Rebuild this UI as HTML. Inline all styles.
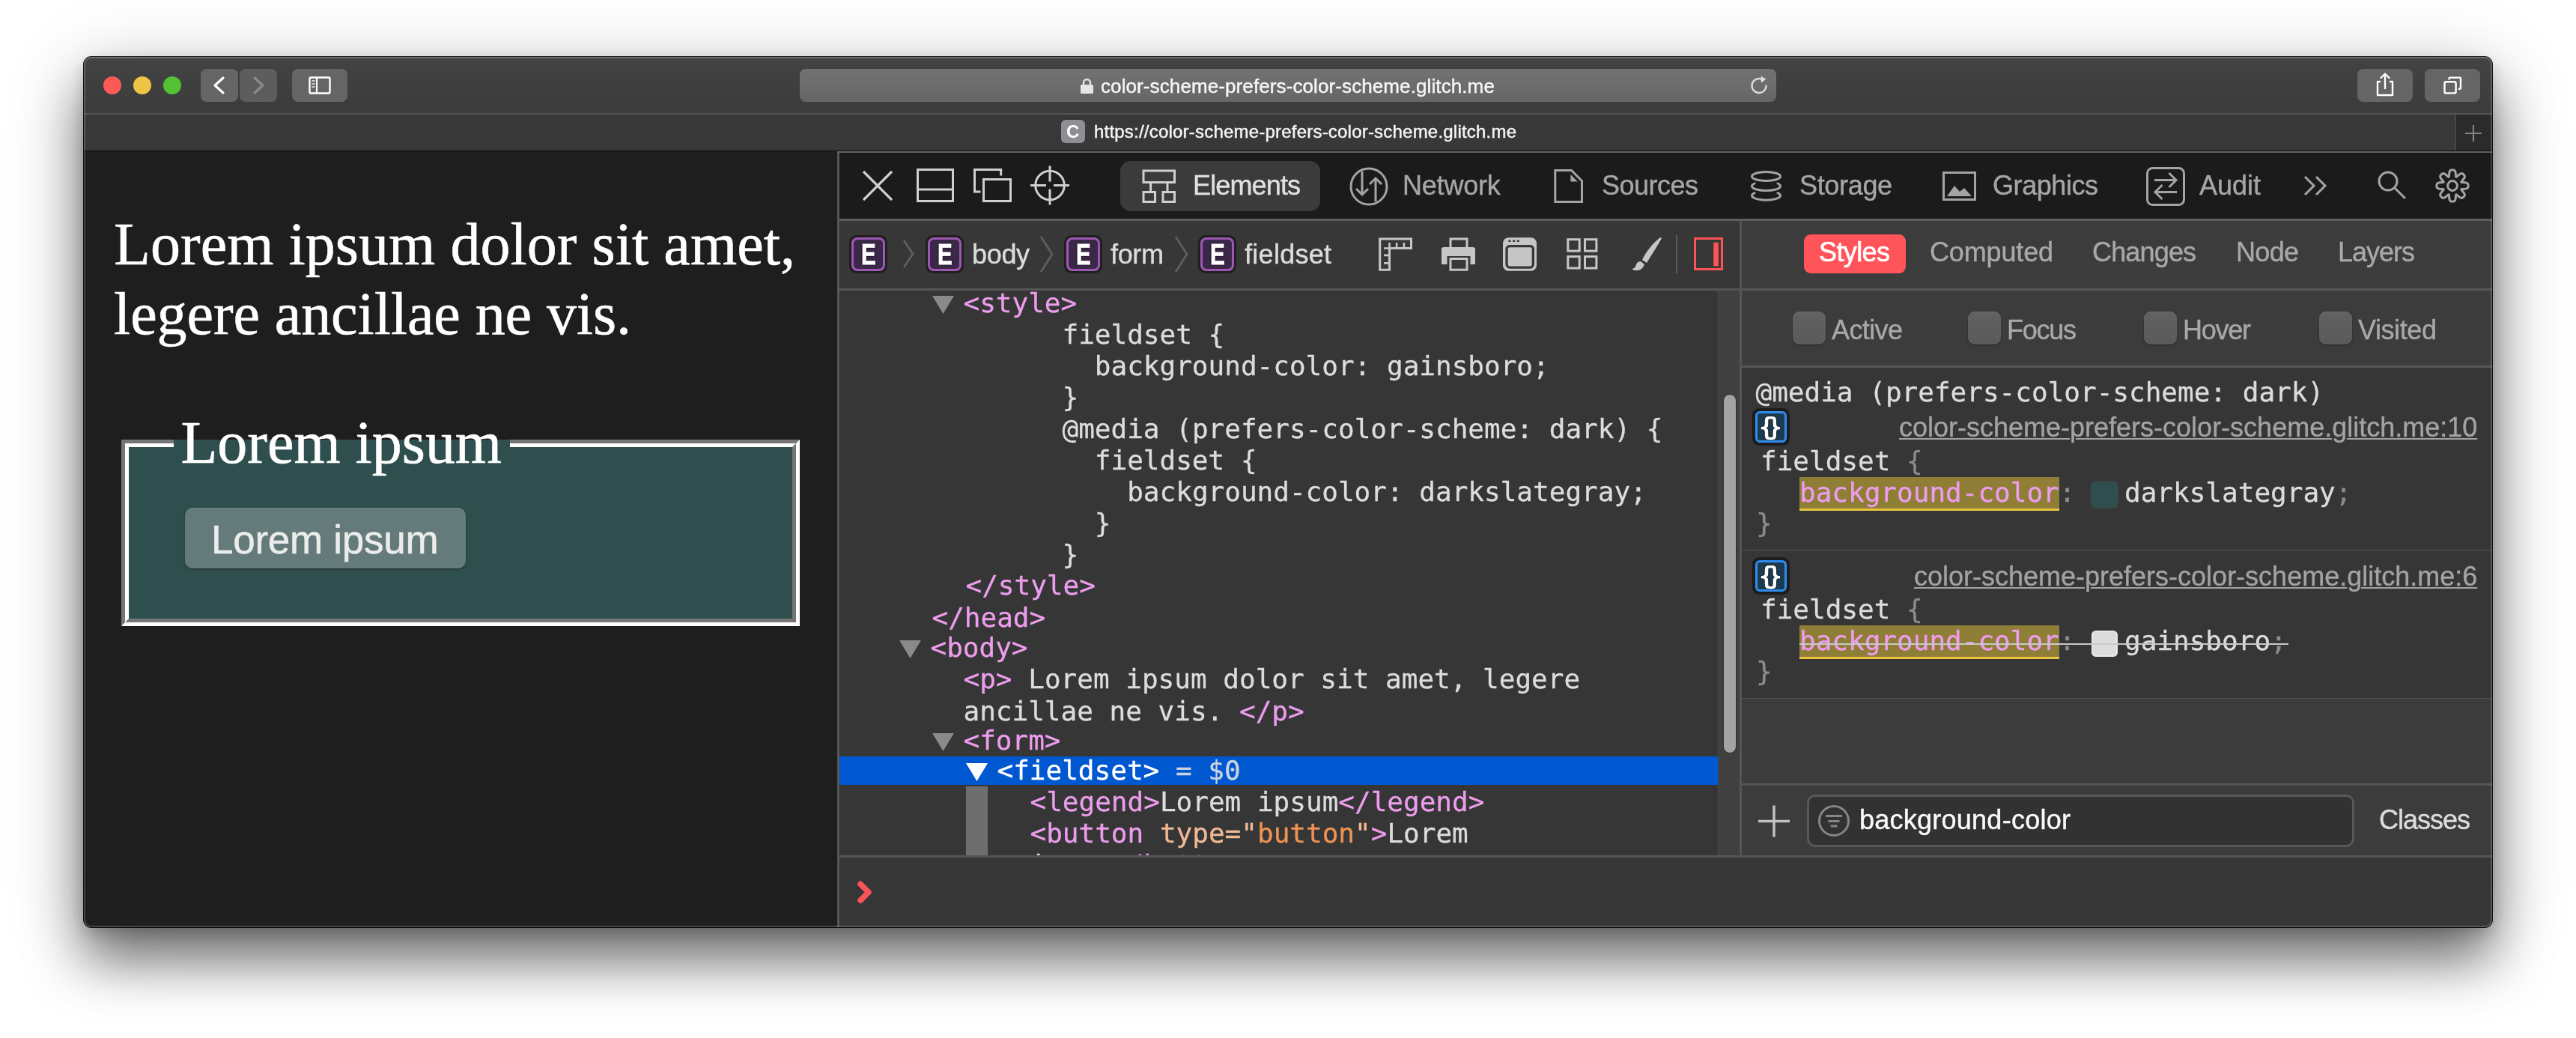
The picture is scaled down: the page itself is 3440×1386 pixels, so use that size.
<!DOCTYPE html>
<html lang="en"><head><meta charset="utf-8"><title>color-scheme-prefers-color-scheme.glitch.me</title><style>
html,body{margin:0;padding:0;background:#fff}
html{overflow:hidden}
body{width:3440px;height:1386px;position:relative;overflow:hidden}
#win{position:absolute;left:112px;top:76px;width:3216px;height:1162px;border-radius:10px;overflow:hidden;background:#1e1e1e}
#sh{position:absolute;left:112px;top:76px;width:3216px;height:1162px;border-radius:10px;box-shadow:0 0 0 1px rgba(0,0,0,.9),0 7px 18px rgba(0,0,0,.17),0 44px 70px rgba(0,0,0,.5),0 18px 110px rgba(0,0,0,.2)}
#in{will-change:transform;position:absolute;left:-112px;top:-76px;width:3440px;height:1386px}
#hl{position:absolute;left:0;top:0;right:0;bottom:0;border-radius:10px;box-shadow:inset 0 0 0 2px rgba(255,255,255,.17);pointer-events:none}
.t{position:absolute;white-space:pre;line-height:1}
.m{font:36px/1 "DejaVu Sans Mono","Liberation Mono",monospace;-webkit-text-stroke:.3px}
.r{position:absolute;display:block}
</style></head><body>
<div id="sh"></div>
<div id="win"><div id="in">
<div class="r" style="left:111px;top:75px;width:3218px;height:77px;background:linear-gradient(#434343,#3b3b3b);"></div>
<div class="r" style="left:111px;top:75px;width:3218px;height:2px;background:rgba(255,255,255,.12);"></div>
<div class="r" style="left:111px;top:151px;width:3218px;height:2px;background:#545454;"></div>
<div class="r" style="left:111px;top:153px;width:3218px;height:48px;background:#383838;"></div>
<div class="r" style="left:111px;top:201px;width:3218px;height:1px;background:#0a0a0a;"></div>
<div class="r" style="left:138px;top:102px;width:24px;height:24px;background:#fc5a56;border-radius:50%"></div>
<div class="r" style="left:178px;top:102px;width:24px;height:24px;background:#eec447;border-radius:50%"></div>
<div class="r" style="left:218px;top:102px;width:24px;height:24px;background:#52c233;border-radius:50%"></div>
<div class="r" style="left:268px;top:92px;width:50px;height:44px;background:#656565;border-radius:8px"></div>
<div class="r" style="left:320px;top:92px;width:50px;height:44px;background:#5d5d5d;border-radius:8px"></div>
<div class="r" style="left:390px;top:92px;width:74px;height:44px;background:#656565;border-radius:8px"></div>
<svg class="r" style="left:268px;top:92px;" width="50" height="44" viewBox="0 0 50 44" fill="none"><path d="M30 12 L19 22 L30 32" stroke="#fff" stroke-width="3.2" stroke-linecap="round" stroke-linejoin="round"/></svg>
<svg class="r" style="left:320px;top:92px;" width="50" height="44" viewBox="0 0 50 44" fill="none"><path d="M20 12 L31 22 L20 32" stroke="#8a8a8a" stroke-width="3.2" stroke-linecap="round" stroke-linejoin="round"/></svg>
<svg class="r" style="left:390px;top:92px;" width="74" height="44" viewBox="0 0 74 44" fill="none"><rect x="23.500" y="11.500" width="27" height="21" rx="1.500" stroke="#fff" stroke-width="2.400"/><path d="M33 11v22" stroke="#fff" stroke-width="2.200"/><path d="M26.5 16h4M26.5 20h4M26.5 24h4" stroke="#cfcfcf" stroke-width="2"/></svg>
<div class="r" style="left:1068px;top:92px;width:1304px;height:44px;background:linear-gradient(#727272,#666);border-radius:8px"></div>
<svg class="r" style="left:1442px;top:103px;" width="20" height="24" viewBox="0 0 20 24" fill="none"><rect x="1" y="10" width="17" height="12" rx="1.5" fill="#e6e6e6"/><path d="M5 11V7.5a4.5 4.5 0 0 1 9 0V11" stroke="#e6e6e6" stroke-width="2.4"/></svg>
<div class="t" style='left:1470.00px;top:102.49px;font:26px/1 "Liberation Sans",sans-serif;color:#f6f6f6;letter-spacing:0.101px;-webkit-text-stroke:.45px #f6f6f6;'>color-scheme-prefers-color-scheme.glitch.me</div>
<svg class="r" style="left:2334px;top:99px;" width="30" height="30" viewBox="0 0 30 30" fill="none"><path d="M24.5 15.5a9.5 9.5 0 1 1-4.2-7.9" stroke="#dcdcdc" stroke-width="2.4" stroke-linecap="round"/><path d="M17.5 2.5l7 4.3-6.6 4.7z" fill="#dcdcdc"/></svg>
<div class="r" style="left:3148px;top:92px;width:74px;height:44px;background:#656565;border-radius:8px"></div>
<div class="r" style="left:3238px;top:92px;width:74px;height:44px;background:#656565;border-radius:8px"></div>
<svg class="r" style="left:3148px;top:92px;" width="74" height="44" viewBox="0 0 74 44" fill="none"><path d="M31 17h-4v18h20V17h-4" stroke="#fff" stroke-width="2.4" stroke-linejoin="round"/><path d="M37 26V7M31.5 12l5.5-5.5 5.5 5.5" stroke="#fff" stroke-width="2.4" stroke-linecap="round" stroke-linejoin="round"/></svg>
<svg class="r" style="left:3238px;top:92px;" width="74" height="44" viewBox="0 0 74 44" fill="none"><rect x="26.500" y="17.200" width="15.100" height="15.200" rx="2" stroke="#fff" stroke-width="2.400"/><path d="M32.500 13.500V12.800Q32.500 11.600 33.700 11.600H46.800Q48 11.600 48 12.800V25.500Q48 26.700 46.800 26.700H45.800" stroke="#fff" stroke-width="2.400" stroke-linecap="round"/></svg>
<div class="r" style="left:1417px;top:160px;width:32px;height:31px;background:#8e8e93;border-radius:6px"></div>
<div class="t" style='left:1424.00px;top:163.68px;font:24px/1 "Liberation Sans",sans-serif;color:#fff;font-weight:700;'>C</div>
<div class="t" style='left:1461.00px;top:164.18px;font:24px/1 "Liberation Sans",sans-serif;color:#f4f4f4;letter-spacing:0.210px;-webkit-text-stroke:.45px #f4f4f4;'>https://color-scheme-prefers-color-scheme.glitch.me</div>
<div class="r" style="left:3279px;top:153px;width:50px;height:48px;background:#2b2b2b;"></div>
<div class="r" style="left:3278px;top:153px;width:2px;height:48px;background:#484848;"></div>
<svg class="r" style="left:3291px;top:166px;" width="24" height="24" viewBox="0 0 24 24" fill="none"><path d="M12 1v22M1 12h22" stroke="#808080" stroke-width="2.200"/></svg>
<div class="r" style="left:111px;top:202px;width:1007px;height:1036px;background:#1e1e1e;"></div>
<div class="t" style='left:152.00px;top:286.30px;font:80px/1 "Liberation Serif",serif;color:#fff;letter-spacing:0.048px;-webkit-text-stroke:.6px #fff;'>Lorem ipsum dolor sit amet,</div>
<div class="t" style='left:152.00px;top:379.20px;font:80px/1 "Liberation Serif",serif;color:#fff;letter-spacing:-0.091px;-webkit-text-stroke:.6px #fff;'>legere ancillae ne vis.</div>
<div class="r" style="left:162px;top:587px;width:906px;height:249px;background:#2f4f4f;box-sizing:border-box;border:10px groove #c0c0c0;border-color:#767676 #fff #fff #767676"></div>
<div class="r" style="left:162px;top:587px;width:906px;height:249px;box-sizing:border-box;border:5px solid;border-color:#767676 #fff #fff #767676"></div>
<div class="r" style="left:167px;top:592px;width:896px;height:239px;box-sizing:border-box;border:5px solid;border-color:#fff #767676 #767676 #fff"></div>
<div class="r" style="left:232px;top:587px;width:449px;height:13px;background:#2f4f4f;"></div>
<div class="t" style='left:241.50px;top:551.20px;font:80px/1 "Liberation Serif",serif;color:#fff;letter-spacing:-0.025px;-webkit-text-stroke:.6px #fff;'>Lorem ipsum</div>
<div class="r" style="left:247px;top:678px;width:375px;height:81px;background:#657b7b;border-radius:10px;box-shadow:0 1px 3px rgba(0,0,0,.45), inset 0 1px 0 rgba(255,255,255,.08)"></div>
<div class="t" style='left:282.00px;top:694.44px;font:53px/1 "Liberation Sans",sans-serif;color:#ececec;letter-spacing:-0.275px;-webkit-text-stroke:.5px #ececec;'>Lorem ipsum</div>
<div class="r" style="left:1118px;top:202px;width:2211px;height:1036px;background:#363636;"></div>
<div class="r" style="left:1118px;top:202px;width:3px;height:1036px;background:#555;"></div>
<div class="r" style="left:1118px;top:202px;width:2211px;height:2px;background:#626262;"></div>
<div class="r" style="left:1121px;top:204px;width:2208px;height:88px;background:#1b1b1b;"></div>
<div class="r" style="left:1121px;top:292px;width:2208px;height:3px;background:#5e5e5e;"></div>
<div class="r" style="left:1121px;top:295px;width:2208px;height:90px;background:#373737;"></div>
<div class="r" style="left:1121px;top:385px;width:2208px;height:3px;background:#555;"></div>
<svg class="r" style="left:1150px;top:226px;" width="44" height="44" viewBox="0 0 44 44" fill="none"><path d="M3 3l38 38M41 3L3 41" stroke="#cfcfcf" stroke-width="3.2"/></svg>
<svg class="r" style="left:1222px;top:223px;" width="54" height="50" viewBox="0 0 54 50" fill="none"><rect x="3.5" y="3.5" width="47" height="42" stroke="#cfcfcf" stroke-width="3"/><path d="M3 30h48" stroke="#cfcfcf" stroke-width="3"/></svg>
<svg class="r" style="left:1298px;top:223px;" width="56" height="50" viewBox="0 0 56 50" fill="none"><rect x="15.5" y="16.5" width="36" height="29" stroke="#cfcfcf" stroke-width="3"/><path d="M38.700 11.500V3.500H3.500V33H11.500" stroke="#cfcfcf" stroke-width="3"/></svg>
<svg class="r" style="left:1374px;top:220px;" width="56" height="56" viewBox="0 0 56 56" fill="none"><circle cx="28" cy="27.500" r="19.300" stroke="#cfcfcf" stroke-width="3"/><path d="M28 1.500v21M28 32.500v21M2 27.500h21M33 27.500h21" stroke="#cfcfcf" stroke-width="3"/></svg>
<div class="r" style="left:1496px;top:215px;width:267px;height:67px;background:#3b3b3b;border-radius:14px"></div>
<svg class="r" style="left:1523px;top:225px;" width="50" height="48" viewBox="0 0 50 48" fill="none"><rect x="4" y="3" width="41.500" height="15.500" stroke="#d0d0d0" stroke-width="3"/><rect x="4" y="31.500" width="15.500" height="13" stroke="#d0d0d0" stroke-width="3"/><rect x="30" y="31.500" width="15.500" height="13" stroke="#d0d0d0" stroke-width="3"/><path d="M13.600 19v12M36 19v12" stroke="#d0d0d0" stroke-width="3"/></svg>
<div class="t" style='left:1593.00px;top:230.03px;font:36px/1 "Liberation Sans",sans-serif;color:#e0e0e0;letter-spacing:-0.857px;-webkit-text-stroke:.4px #e0e0e0;'>Elements</div>
<svg class="r" style="left:1800px;top:221px;" width="56" height="56" viewBox="0 0 56 56" fill="none"><circle cx="28" cy="28" r="24" stroke="#a4a4a4" stroke-width="3"/><path d="M19 8v31M11 31l8 8 8-8M37 48V17M29 25l8-8 8 8" stroke="#a4a4a4" stroke-width="3"/></svg>
<div class="t" style='left:1873.00px;top:230.03px;font:36px/1 "Liberation Sans",sans-serif;color:#a6a6a6;letter-spacing:-0.208px;-webkit-text-stroke:.4px #a6a6a6;'>Network</div>
<svg class="r" style="left:2073px;top:224px;" width="44" height="50" viewBox="0 0 44 50" fill="none"><path d="M3.800 3.500H25.500L39.500 17.500V45.500H3.800Z" stroke="#a4a4a4" stroke-width="3"/><path d="M24.400 9v9.500h9.500z" fill="#a4a4a4"/></svg>
<div class="t" style='left:2139.00px;top:230.03px;font:36px/1 "Liberation Sans",sans-serif;color:#a6a6a6;letter-spacing:-0.500px;-webkit-text-stroke:.4px #a6a6a6;'>Sources</div>
<svg class="r" style="left:2334px;top:224px;" width="50" height="50" viewBox="0 0 50 50" fill="none"><ellipse cx="24.500" cy="11.500" rx="19" ry="6" stroke="#a4a4a4" stroke-width="3"/><path d="M9.070 21A19 6 0 1 0 39.930 21M9.070 33.700A19 6 0 1 0 39.930 33.700" stroke="#a4a4a4" stroke-width="3" stroke-linecap="round"/></svg>
<div class="t" style='left:2403.00px;top:230.03px;font:36px/1 "Liberation Sans",sans-serif;color:#a6a6a6;letter-spacing:-0.333px;-webkit-text-stroke:.4px #a6a6a6;'>Storage</div>
<svg class="r" style="left:2592px;top:227px;" width="50" height="44" viewBox="0 0 50 44" fill="none"><rect x="3.5" y="3.5" width="42" height="36" stroke="#a4a4a4" stroke-width="3"/><path d="M8 35l10-14 7 8 6-5 10 11z" fill="#a4a4a4"/></svg>
<div class="t" style='left:2661.00px;top:230.03px;font:36px/1 "Liberation Sans",sans-serif;color:#a6a6a6;letter-spacing:-0.429px;-webkit-text-stroke:.4px #a6a6a6;'>Graphics</div>
<svg class="r" style="left:2864px;top:221px;" width="56" height="56" viewBox="0 0 56 56" fill="none"><rect x="3.500" y="3.500" width="49" height="49" rx="7" stroke="#a4a4a4" stroke-width="3"/><path d="M13 19.500h29M32.500 10l9.500 9.500-9.500 9.500M43 35.500H14M23.500 26l-9.500 9.500 9.500 9.500" stroke="#a4a4a4" stroke-width="3"/></svg>
<div class="t" style='left:2937.00px;top:230.03px;font:36px/1 "Liberation Sans",sans-serif;color:#a6a6a6;-webkit-text-stroke:.4px #a6a6a6;'>Audit</div>
<svg class="r" style="left:3075px;top:233px;" width="36" height="30" viewBox="0 0 36 30" fill="none"><path d="M3 3l12 12L3 27M18 3l12 12-12 12" stroke="#a4a4a4" stroke-width="3"/></svg>
<svg class="r" style="left:3173px;top:226.3px;" width="42" height="42" viewBox="0 0 42 42" fill="none"><circle cx="16" cy="16" r="12" stroke="#a4a4a4" stroke-width="3"/><path d="M25 25l14 14" stroke="#a4a4a4" stroke-width="3"/></svg>
<svg class="r" style="left:3251px;top:224px;" width="48" height="48" viewBox="0 0 48 48" fill="none"><path d="M24.0 2.9L25.0 2.9L26.1 3.1L27.0 3.8L27.8 5.1L28.2 7.1L28.4 9.5L28.5 11.4L28.9 12.3L29.7 11.9L31.2 10.6L32.9 9.1L34.7 8.0L36.2 7.6L37.3 7.8L38.2 8.4L38.9 9.1L39.6 9.8L40.2 10.7L40.4 11.8L40.0 13.3L38.9 15.1L37.4 16.8L36.1 18.3L35.7 19.1L36.6 19.5L38.5 19.6L40.9 19.8L42.9 20.2L44.2 21.0L44.9 21.9L45.1 23.0L45.1 24.0L45.1 25.0L44.9 26.1L44.2 27.0L42.9 27.8L40.9 28.2L38.5 28.4L36.6 28.5L35.7 28.9L36.1 29.7L37.4 31.2L38.9 32.9L40.0 34.7L40.4 36.2L40.2 37.3L39.6 38.2L38.9 38.9L38.2 39.6L37.3 40.2L36.2 40.4L34.7 40.0L32.9 38.9L31.2 37.4L29.7 36.1L28.9 35.7L28.5 36.6L28.4 38.5L28.2 40.9L27.8 42.9L27.0 44.2L26.1 44.9L25.0 45.1L24.0 45.1L23.0 45.1L21.9 44.9L21.0 44.2L20.2 42.9L19.8 40.9L19.6 38.5L19.5 36.6L19.1 35.7L18.3 36.1L16.8 37.4L15.1 38.9L13.3 40.0L11.8 40.4L10.7 40.2L9.8 39.6L9.1 38.9L8.4 38.2L7.8 37.3L7.6 36.2L8.0 34.7L9.1 32.9L10.6 31.2L11.9 29.7L12.3 28.9L11.4 28.5L9.5 28.4L7.1 28.2L5.1 27.8L3.8 27.0L3.1 26.1L2.9 25.0L2.9 24.0L2.9 23.0L3.1 21.9L3.8 21.0L5.1 20.2L7.1 19.8L9.5 19.6L11.4 19.5L12.3 19.1L11.9 18.3L10.6 16.8L9.1 15.1L8.0 13.3L7.6 11.8L7.8 10.7L8.4 9.8L9.1 9.1L9.8 8.4L10.7 7.8L11.8 7.6L13.3 8.0L15.1 9.1L16.8 10.6L18.3 11.9L19.1 12.3L19.5 11.4L19.6 9.5L19.8 7.1L20.2 5.1L21.0 3.8L21.9 3.1L23.0 2.9Z" stroke="#a4a4a4" stroke-width="3" stroke-linejoin="round"/><circle cx="24" cy="24" r="6.400" stroke="#a4a4a4" stroke-width="3"/></svg>
<div class="r" style="left:1134px;top:314px;width:51px;height:51px;background:#1f1f1f;border-radius:10px"></div><div class="r" style="left:1137px;top:317px;width:45px;height:45px;background:#3b2848;border-radius:8px;box-sizing:border-box;border:3px solid #9d58b3"></div><div class="t" style='left:1149.90px;top:319.79px;font:39px/1 "Liberation Sans",sans-serif;color:#fff;font-weight:700;transform:scaleX(.76);transform-origin:0 0;-webkit-text-stroke:.8px #fff;text-shadow:0 0 2px #000,0 0 3px #000;'>E</div>
<svg class="r" style="left:1205px;top:319px;" width="16" height="40" viewBox="0 0 16 40" fill="none"><path d="M2 2l12 18.0L2 38" stroke="#5e5e5e" stroke-width="2.800"/></svg>
<div class="r" style="left:1236px;top:314px;width:51px;height:51px;background:#1f1f1f;border-radius:10px"></div><div class="r" style="left:1239px;top:317px;width:45px;height:45px;background:#3b2848;border-radius:8px;box-sizing:border-box;border:3px solid #9d58b3"></div><div class="t" style='left:1251.90px;top:319.79px;font:39px/1 "Liberation Sans",sans-serif;color:#fff;font-weight:700;transform:scaleX(.76);transform-origin:0 0;-webkit-text-stroke:.8px #fff;text-shadow:0 0 2px #000,0 0 3px #000;'>E</div>
<div class="t" style='left:1298.00px;top:322.23px;font:36px/1 "Liberation Sans",sans-serif;color:#dcdcdc;letter-spacing:-0.333px;-webkit-text-stroke:.4px #dcdcdc;'>body</div>
<svg class="r" style="left:1388px;top:314px;" width="19" height="51" viewBox="0 0 19 51" fill="none"><path d="M2 2l15 23.5L2 49" stroke="#5e5e5e" stroke-width="2.800"/></svg>
<div class="r" style="left:1421px;top:314px;width:51px;height:51px;background:#1f1f1f;border-radius:10px"></div><div class="r" style="left:1424px;top:317px;width:45px;height:45px;background:#3b2848;border-radius:8px;box-sizing:border-box;border:3px solid #9d58b3"></div><div class="t" style='left:1436.90px;top:319.79px;font:39px/1 "Liberation Sans",sans-serif;color:#fff;font-weight:700;transform:scaleX(.76);transform-origin:0 0;-webkit-text-stroke:.8px #fff;text-shadow:0 0 2px #000,0 0 3px #000;'>E</div>
<div class="t" style='left:1483.00px;top:322.23px;font:36px/1 "Liberation Sans",sans-serif;color:#dcdcdc;letter-spacing:-0.333px;-webkit-text-stroke:.4px #dcdcdc;'>form</div>
<svg class="r" style="left:1568px;top:314px;" width="19" height="51" viewBox="0 0 19 51" fill="none"><path d="M2 2l15 23.5L2 49" stroke="#5e5e5e" stroke-width="2.800"/></svg>
<div class="r" style="left:1600px;top:314px;width:51px;height:51px;background:#1f1f1f;border-radius:10px"></div><div class="r" style="left:1603px;top:317px;width:45px;height:45px;background:#3b2848;border-radius:8px;box-sizing:border-box;border:3px solid #9d58b3"></div><div class="t" style='left:1615.90px;top:319.79px;font:39px/1 "Liberation Sans",sans-serif;color:#fff;font-weight:700;transform:scaleX(.76);transform-origin:0 0;-webkit-text-stroke:.8px #fff;text-shadow:0 0 2px #000,0 0 3px #000;'>E</div>
<div class="t" style='left:1662.00px;top:322.23px;font:36px/1 "Liberation Sans",sans-serif;color:#dcdcdc;letter-spacing:0.286px;-webkit-text-stroke:.4px #dcdcdc;'>fieldset</div>
<svg class="r" style="left:1839px;top:316px;" width="50" height="48" viewBox="0 0 50 48" fill="none"><path d="M3.700 2.900H45.500V15.500H16.500V44.200H3.700Z" stroke="#c6c6c6" stroke-width="3"/><path d="M16.500 8v7.500M26.100 8v7.500M35.900 8v7.500M9 15.500h7.500M9 24.900h7.500M9 35.400h7.500" stroke="#c6c6c6" stroke-width="2.600"/></svg>
<svg class="r" style="left:1923px;top:316px;" width="50" height="48" viewBox="0 0 50 48" fill="none"><path d="M14 14V3h22V14" stroke="#c6c6c6" stroke-width="3"/><path d="M2 17a3 3 0 0 1 3-3h39a3 3 0 0 1 3 3v20H2z" fill="#c6c6c6"/><rect x="9.500" y="26" width="31" height="22" fill="#383838"/><rect x="14" y="29.500" width="22" height="14.700" stroke="#c6c6c6" stroke-width="3"/></svg>
<svg class="r" style="left:2005px;top:316px;" width="50" height="48" viewBox="0 0 50 48" fill="none"><rect x="2" y="1.200" width="45" height="44.500" rx="7.500" fill="#c6c6c6"/><rect x="7.050" y="12.600" width="35.300" height="28.450" rx="4" stroke="#383838" stroke-width="3.300"/><path d="M9.500 5.700h3M15.100 5.700h3M20.800 5.700h3" stroke="#383838" stroke-width="2.600"/></svg>
<svg class="r" style="left:2090px;top:317px;" width="48" height="48" viewBox="0 0 48 48" fill="none"><rect x="3.8" y="2.7" width="15.400" height="15.400" stroke="#c6c6c6" stroke-width="3"/><rect x="3.8" y="25.6" width="15.400" height="15.400" stroke="#c6c6c6" stroke-width="3"/><rect x="26.5" y="2.7" width="15.400" height="15.400" stroke="#c6c6c6" stroke-width="3"/><rect x="26.5" y="25.6" width="15.400" height="15.400" stroke="#c6c6c6" stroke-width="3"/></svg>
<svg class="r" style="left:2176px;top:314px;" width="46" height="50" viewBox="0 0 46 50" fill="none"><path d="M41 3C31 11 22 22 17 33l6 4C29 27 37 15 43 4z" fill="#c6c6c6"/><path d="M15 35c-5 0-6 4-7 7-1 2-3 3-5 3 5 4 14 3 17-6z" fill="#c6c6c6"/></svg>
<div class="r" style="left:2238px;top:314px;width:2px;height:51px;background:#5a5a5a;"></div>
<svg class="r" style="left:2260px;top:315px;" width="44" height="48" viewBox="0 0 44 48" fill="none"><rect x="3.500" y="3.500" width="36" height="41" stroke="#fb5358" stroke-width="3"/><rect x="28.300" y="8.700" width="6.600" height="31.700" fill="#fb5358"/></svg>
<div class="r" style="left:1121px;top:388px;width:1173px;height:754px;overflow:hidden"><div class="r" style="left:-1121px;top:-388px;width:3440px;height:1386px">
<svg class="r" style="left:1245px;top:395px;" width="29" height="24" viewBox="0 0 29 24" fill="none"><path d="M0 0h29L14.500 24z" fill="#8a8a8a"/></svg>
<div class="t m" style="left:1286.50px;top:386.94px;"><span style="color:#ed9ded">&lt;style&gt;</span></div>
<div class="t m" style="left:1418.50px;top:428.94px;"><span style="color:#dcdcdc">fieldset {</span></div>
<div class="t m" style="left:1461.84px;top:470.94px;"><span style="color:#dcdcdc">background-color: gainsboro;</span></div>
<div class="t m" style="left:1418.50px;top:512.94px;"><span style="color:#dcdcdc">}</span></div>
<div class="t m" style="left:1418.50px;top:554.94px;"><span style="color:#dcdcdc">@media (prefers-color-scheme: dark) {</span></div>
<div class="t m" style="left:1461.84px;top:596.94px;"><span style="color:#dcdcdc">fieldset {</span></div>
<div class="t m" style="left:1505.19px;top:638.94px;"><span style="color:#dcdcdc">background-color: darkslategray;</span></div>
<div class="t m" style="left:1461.84px;top:680.94px;"><span style="color:#dcdcdc">}</span></div>
<div class="t m" style="left:1418.50px;top:722.94px;"><span style="color:#dcdcdc">}</span></div>
<div class="t m" style="left:1289.50px;top:763.54px;"><span style="color:#ed9ded">&lt;/style&gt;</span></div>
<div class="t m" style="left:1244.50px;top:806.54px;"><span style="color:#ed9ded">&lt;/head&gt;</span></div>
<svg class="r" style="left:1201px;top:855px;" width="29" height="24" viewBox="0 0 29 24" fill="none"><path d="M0 0h29L14.500 24z" fill="#8a8a8a"/></svg>
<div class="t m" style="left:1242.50px;top:847.04px;"><span style="color:#ed9ded">&lt;body&gt;</span></div>
<div class="t m" style="left:1286.50px;top:889.24px;"><span style="color:#ed9ded">&lt;p&gt;</span><span style="color:#dcdcdc"> Lorem ipsum dolor sit amet, legere</span></div>
<div class="t m" style="left:1286.50px;top:931.54px;"><span style="color:#dcdcdc">ancillae ne vis. </span><span style="color:#ed9ded">&lt;/p&gt;</span></div>
<svg class="r" style="left:1245px;top:979px;" width="29" height="24" viewBox="0 0 29 24" fill="none"><path d="M0 0h29L14.500 24z" fill="#8a8a8a"/></svg>
<div class="t m" style="left:1286.50px;top:970.54px;"><span style="color:#ed9ded">&lt;form&gt;</span></div>
<div class="r" style="left:1121px;top:1010px;width:1173px;height:38px;background:#0058d0;"></div>
<svg class="r" style="left:1290px;top:1019px;" width="29" height="24" viewBox="0 0 29 24" fill="none"><path d="M0 0h29L14.500 24z" fill="#fff"/></svg>
<div class="t m" style="left:1331.50px;top:1010.54px;"><span style="color:#fff">&lt;fieldset&gt;</span><span style="color:#cad2e0"> = $0</span></div>
<div class="r" style="left:1290px;top:1050px;width:29px;height:92px;background:#6e6e6e;"></div>
<div class="t m" style="left:1375.50px;top:1052.54px;"><span style="color:#ed9ded">&lt;legend&gt;</span><span style="color:#dcdcdc">Lorem ipsum</span><span style="color:#ed9ded">&lt;/legend&gt;</span></div>
<div class="t m" style="left:1375.50px;top:1094.84px;"><span style="color:#ed9ded">&lt;button </span><span style="color:#f0b994">type</span><span style="color:#f0b994">=&quot;</span><span style="color:#ee9352">button</span><span style="color:#f0b994">&quot;</span><span style="color:#ed9ded">&gt;</span><span style="color:#dcdcdc">Lorem</span></div>
<div class="t m" style="left:1375.50px;top:1137.04px;"><span style="color:#dcdcdc">ipsum</span><span style="color:#ed9ded">&lt;/button&gt;</span></div>
</div></div>
<div class="r" style="left:2294px;top:388px;width:29px;height:754px;background:#404040;"></div>
<div class="r" style="left:2294px;top:388px;width:1px;height:754px;background:#4c4c4c;"></div>
<div class="r" style="left:2302px;top:527px;width:16px;height:478px;background:#a3a3a3;border-radius:8px;box-shadow:0 0 0 1px #303030"></div>
<div class="r" style="left:2323px;top:295px;width:3px;height:847px;background:#555;"></div>
<div class="r" style="left:1121px;top:1142px;width:2208px;height:3px;background:#555;"></div>
<div class="r" style="left:1121px;top:1145px;width:2208px;height:93px;background:#363636;"></div>
<svg class="r" style="left:1142px;top:1174px;" width="26" height="36" viewBox="0 0 26 36" fill="none"><path d="M7 6.500L18 17.400L7 28.200" stroke="#f9545a" stroke-width="7.500" stroke-linecap="round" stroke-linejoin="round"/></svg>
<div class="r" style="left:2326px;top:295px;width:1003px;height:847px;background:#3c3c3c;"></div>
<div class="r" style="left:2326px;top:385px;width:1003px;height:3px;background:#555;"></div>
<div class="r" style="left:2409px;top:313px;width:136px;height:52px;background:#ff5459;border-radius:9px"></div>
<div class="t" style='left:2429.00px;top:318.53px;font:36px/1 "Liberation Sans",sans-serif;color:#fff;letter-spacing:-0.600px;-webkit-text-stroke:.6px #fff;'>Styles</div>
<div class="t" style='left:2577.00px;top:318.53px;font:36px/1 "Liberation Sans",sans-serif;color:#a8a8a8;letter-spacing:-0.143px;-webkit-text-stroke:.4px #a8a8a8;'>Computed</div>
<div class="t" style='left:2794.00px;top:318.53px;font:36px/1 "Liberation Sans",sans-serif;color:#a8a8a8;letter-spacing:-0.833px;-webkit-text-stroke:.4px #a8a8a8;'>Changes</div>
<div class="t" style='left:2986.00px;top:318.53px;font:36px/1 "Liberation Sans",sans-serif;color:#a8a8a8;letter-spacing:-0.667px;-webkit-text-stroke:.4px #a8a8a8;'>Node</div>
<div class="t" style='left:3122.00px;top:318.53px;font:36px/1 "Liberation Sans",sans-serif;color:#a8a8a8;letter-spacing:-1.000px;-webkit-text-stroke:.4px #a8a8a8;'>Layers</div>
<div class="r" style="left:2326px;top:488px;width:1003px;height:3px;background:#555;"></div>
<div class="r" style="left:2394px;top:416px;width:44px;height:44px;background:linear-gradient(#626262,#5a5a5a);border-radius:9px;box-shadow:0 1px 2px rgba(0,0,0,.4),inset 0 1px 0 rgba(255,255,255,.08)"></div>
<div class="t" style='left:2446.00px;top:422.53px;font:36px/1 "Liberation Sans",sans-serif;color:#a8a8a8;letter-spacing:-0.600px;-webkit-text-stroke:.4px #a8a8a8;'>Active</div>
<div class="r" style="left:2628px;top:416px;width:44px;height:44px;background:linear-gradient(#626262,#5a5a5a);border-radius:9px;box-shadow:0 1px 2px rgba(0,0,0,.4),inset 0 1px 0 rgba(255,255,255,.08)"></div>
<div class="t" style='left:2680.00px;top:422.53px;font:36px/1 "Liberation Sans",sans-serif;color:#a8a8a8;letter-spacing:-1.250px;-webkit-text-stroke:.4px #a8a8a8;'>Focus</div>
<div class="r" style="left:2863px;top:416px;width:44px;height:44px;background:linear-gradient(#626262,#5a5a5a);border-radius:9px;box-shadow:0 1px 2px rgba(0,0,0,.4),inset 0 1px 0 rgba(255,255,255,.08)"></div>
<div class="t" style='left:2915.00px;top:422.53px;font:36px/1 "Liberation Sans",sans-serif;color:#a8a8a8;letter-spacing:-1.250px;-webkit-text-stroke:.4px #a8a8a8;'>Hover</div>
<div class="r" style="left:3097px;top:416px;width:44px;height:44px;background:linear-gradient(#626262,#5a5a5a);border-radius:9px;box-shadow:0 1px 2px rgba(0,0,0,.4),inset 0 1px 0 rgba(255,255,255,.08)"></div>
<div class="t" style='left:3149.00px;top:422.53px;font:36px/1 "Liberation Sans",sans-serif;color:#a8a8a8;letter-spacing:-0.417px;-webkit-text-stroke:.4px #a8a8a8;'>Visited</div>
<div class="r" style="left:2326px;top:491px;width:1003px;height:441px;background:#363636;"></div>
<div class="t m" style="left:2344.50px;top:505.94px;"><span style="color:#dcdcdc">@media (prefers-color-scheme: dark)</span></div>
<div class="r" style="left:2339.5px;top:545px;width:50.0px;height:50px;background:#1d1d1d;border-radius:9px"></div><div class="r" style="left:2343.5px;top:549px;width:42.0px;height:42px;background:#1d3b50;border-radius:6px;box-sizing:border-box;border:3px solid #2f8cf0"></div><div class="t" style='left:2349.00px;top:554.28px;font:33px/1 "DejaVu Sans Mono","Liberation Mono",monospace;color:#fff;letter-spacing:-8.750px;font-weight:bold;text-shadow:0 0 2px #000;'>{}</div>
<div class="t" style='left:2536.00px;top:552.53px;font:36px/1 "Liberation Sans",sans-serif;color:#a3a3a3;-webkit-text-stroke:.35px #a3a3a3;text-decoration:underline;text-decoration-thickness:2px;text-underline-offset:2px;'>color-scheme-prefers-color-scheme.glitch.me:10</div>
<div class="t m" style="left:2351.00px;top:597.54px;"><span style="color:#dcdcdc">fieldset</span><span style="color:#8c8c8c"> {</span></div>
<div class="r" style="left:2403px;top:637px;width:347px;height:45px;background:#8f7e35;"></div>
<div class="r" style="left:2403px;top:679px;width:347px;height:3px;background:#e9c33c;"></div>
<div class="t m" style="left:2403.00px;top:639.54px;"><span style="color:#ed9ded">background-color</span><span style="color:#8c8c8c">:</span></div>
<div class="r" style="left:2793px;top:643px;width:35px;height:35px;background:#2f4f4f;border-radius:6px;box-shadow:0 0 0 1px rgba(255,255,255,.06)"></div>
<div class="t m" style="left:2837.00px;top:639.54px;"><span style="color:#dcdcdc">darkslategray</span><span style="color:#8c8c8c">;</span></div>
<div class="t m" style="left:2345.00px;top:680.54px;"><span style="color:#8c8c8c">}</span></div>
<div class="r" style="left:2326px;top:734px;width:1003px;height:1px;background:#515151;"></div>
<div class="r" style="left:2339.5px;top:743.5px;width:50.0px;height:50.0px;background:#1d1d1d;border-radius:9px"></div><div class="r" style="left:2343.5px;top:747.5px;width:42.0px;height:42.0px;background:#1d3b50;border-radius:6px;box-sizing:border-box;border:3px solid #2f8cf0"></div><div class="t" style='left:2349.00px;top:752.78px;font:33px/1 "DejaVu Sans Mono","Liberation Mono",monospace;color:#fff;letter-spacing:-8.750px;font-weight:bold;text-shadow:0 0 2px #000;'>{}</div>
<div class="t" style='left:2556.00px;top:752.03px;font:36px/1 "Liberation Sans",sans-serif;color:#a3a3a3;-webkit-text-stroke:.35px #a3a3a3;text-decoration:underline;text-decoration-thickness:2px;text-underline-offset:2px;'>color-scheme-prefers-color-scheme.glitch.me:6</div>
<div class="t m" style="left:2351.00px;top:796.24px;"><span style="color:#dcdcdc">fieldset</span><span style="color:#8c8c8c"> {</span></div>
<div class="r" style="left:2403px;top:835px;width:347px;height:45px;background:#8f7e35;"></div>
<div class="r" style="left:2403px;top:877px;width:347px;height:3px;background:#e9c33c;"></div>
<div class="t m" style="left:2403.00px;top:838.04px;"><span style="color:#ed9ded">background-color</span><span style="color:#8c8c8c">:</span></div>
<div class="r" style="left:2793px;top:842px;width:35px;height:35px;background:#dcdcdc;border-radius:6px;box-shadow:inset 0 0 0 2px rgba(255,255,255,.35)"></div>
<div class="t m" style="left:2837.00px;top:838.04px;"><span style="color:#dcdcdc">gainsboro</span><span style="color:#8c8c8c">;</span></div>
<div class="r" style="left:2403px;top:859px;width:653px;height:2px;background:#c9c9c9;"></div>
<div class="t m" style="left:2345.00px;top:879.04px;"><span style="color:#8c8c8c">}</span></div>
<div class="r" style="left:2326px;top:932px;width:1003px;height:1px;background:#515151;"></div>
<div class="r" style="left:2326px;top:1046px;width:1003px;height:3px;background:#555;"></div>
<svg class="r" style="left:2346px;top:1074px;" width="46" height="46" viewBox="0 0 46 46" fill="none"><path d="M23 1.500v42M2 22.500h42" stroke="#c4c4c4" stroke-width="3.400"/></svg>
<div class="r" style="left:2413px;top:1061px;width:731px;height:70px;background:#323232;border-radius:11px;box-sizing:border-box;border:3px solid #585858"></div>
<svg class="r" style="left:2427px;top:1075px;" width="44" height="44" viewBox="0 0 44 44" fill="none"><circle cx="22" cy="21" r="19.500" stroke="#868686" stroke-width="3"/><path d="M11 14.500h22M14.500 21.500h15M17.500 28h9" stroke="#868686" stroke-width="3.200"/></svg>
<div class="t" style='left:2483.00px;top:1077.03px;font:36px/1 "Liberation Sans",sans-serif;color:#fafafa;letter-spacing:0.250px;-webkit-text-stroke:.4px #fafafa;'>background-color</div>
<div class="t" style='left:3177.00px;top:1077.03px;font:36px/1 "Liberation Sans",sans-serif;color:#dcdcdc;letter-spacing:-1.000px;-webkit-text-stroke:.4px #dcdcdc;'>Classes</div>
</div><div id="hl"></div></div>
</body></html>
